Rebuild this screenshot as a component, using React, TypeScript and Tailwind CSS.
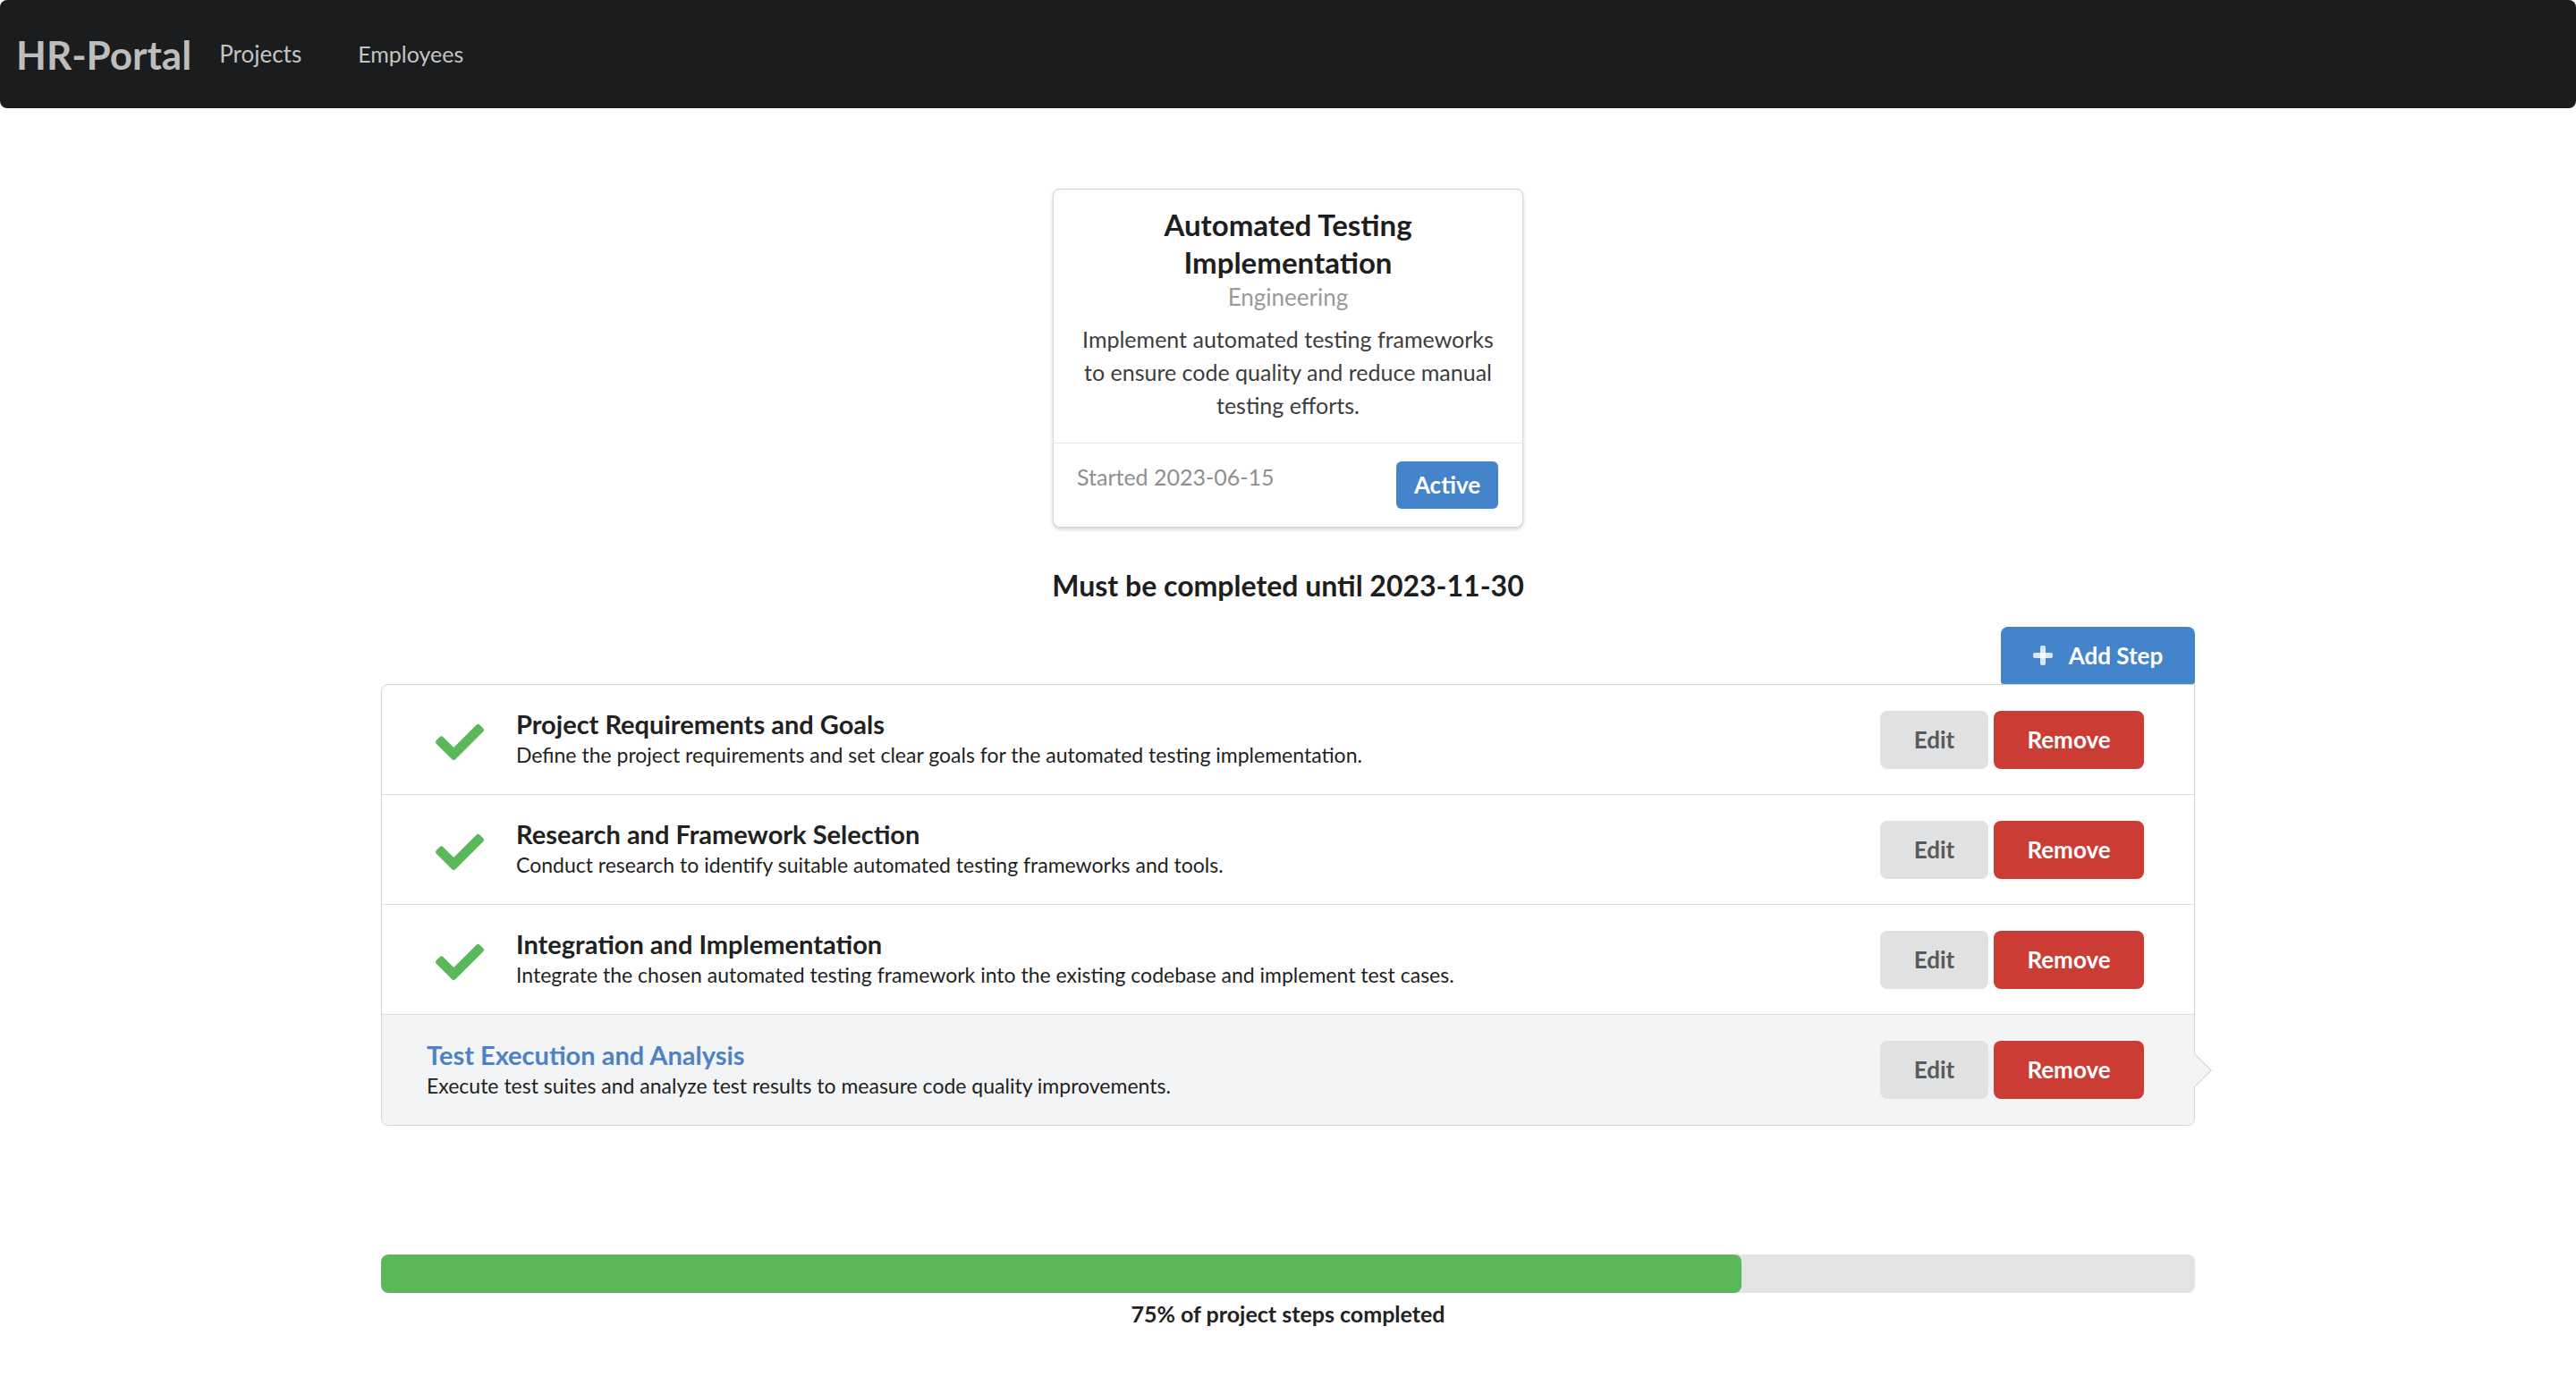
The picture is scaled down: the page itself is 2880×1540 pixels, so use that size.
import React from "react";

const CHECK =
  "M173.898 439.404l-166.4-166.4c-9.997-9.997-9.997-26.206 0-36.204l36.203-36.204c9.997-9.998 26.207-9.998 36.204 0L192 312.69 432.095 72.596c9.997-9.997 26.207-9.997 36.204 0l36.203 36.204c9.997 9.997 9.997 26.206 0 36.204l-294.4 294.401c-9.998 9.997-26.207 9.997-36.204-.001z";

type Step = { title: string; desc: string; done: boolean };

const steps: Step[] = [
  {
    title: "Project Requirements and Goals",
    desc: "Define the project requirements and set clear goals for the automated testing implementation.",
    done: true,
  },
  {
    title: "Research and Framework Selection",
    desc: "Conduct research to identify suitable automated testing frameworks and tools.",
    done: true,
  },
  {
    title: "Integration and Implementation",
    desc: "Integrate the chosen automated testing framework into the existing codebase and implement test cases.",
    done: true,
  },
  {
    title: "Test Execution and Analysis",
    desc: "Execute test suites and analyze test results to measure code quality improvements.",
    done: false,
  },
];

function StepRow({ step, last }: { step: Step; last: boolean }) {
  const active = !step.done;
  return (
    <div
      className={`relative flex items-center h-[123px] ${
        last ? "" : "border-b border-[#dedede]"
      } ${active ? "bg-[#f3f4f5] rounded-b-[8px] pl-[50px]" : "pl-[60px]"} pr-[56px]`}
    >
      {step.done && (
        <svg
          viewBox="0 0 512 512"
          className="w-[54px] h-[54px] shrink-0 mr-[36px] mt-[6px]"
        >
          <path d={CHECK} fill="#5bb85a" />
        </svg>
      )}
      <div className="flex-1 flex flex-col">
        <div
          className={`text-[29px] leading-[34px] font-bold ${
            active ? "text-[#4f82c4]" : "text-[#212121]"
          }`}
        >
          {step.title}
        </div>
        <div className="text-[23px] leading-[34px] text-[#1f1f1f]">{step.desc}</div>
      </div>
      <div className="flex gap-[6px]">
        <button className="w-[121px] h-[65px] rounded-[8px] bg-[#e0e1e2] text-[#5a5a5a] text-[26px] font-bold">
          Edit
        </button>
        <button className="w-[168px] h-[65px] rounded-[8px] bg-[#ca3c34] text-white text-[26px] font-bold">
          Remove
        </button>
      </div>
      {active && (
        <div className="absolute right-[-14px] top-1/2 -translate-y-1/2 w-[28px] h-[28px] rotate-45 bg-[#f3f4f5] border-t border-r border-[#d4d4d5]" />
      )}
    </div>
  );
}

export default function App() {
  return (
    <div className="min-h-[1540px] bg-white font-['Lato',sans-serif]">
      <nav className="h-[121px] bg-[#1b1c1d] rounded-[8px] flex items-center pl-[18px]">
        <span className="text-[44px] font-bold text-[#bdbdbd] leading-none">HR-Portal</span>
        <span className="ml-[31px] text-[26px] text-[#c4c4c4]">Projects</span>
        <span className="ml-[63px] text-[25px] text-[#c4c4c4]">Employees</span>
      </nav>

      <div className="flex justify-center mt-[90px]">
        <div className="w-[526px] h-[379px] rounded-[8px] bg-white border border-[#d4d4d5] shadow-[0_2px_4px_0_#d4d4d5] flex flex-col">
          <div className="px-[16px] pt-[18px] pb-[23px] text-center whitespace-nowrap">
            <div className="text-[33px] leading-[42px] font-bold text-[#1e1e1e]">
              Automated Testing
              <br />
              Implementation
            </div>
            <div className="text-[26px] leading-[36px] text-[#9a9a9a]">Engineering</div>
            <div className="mt-[11px] text-[25px] leading-[37px] text-[#3d3d3d]">
              Implement automated testing frameworks
              <br />
              to ensure code quality and reduce manual
              <br />
              testing efforts.
            </div>
          </div>
          <div className="flex-1 border-t border-[#e8e8e8] flex items-start justify-between pl-[26px] pr-[27px] pt-[20px]">
            <span className="text-[25px] leading-[34px] text-[#8f8f8f]">Started 2023-06-15</span>
            <span className="w-[114px] h-[53px] rounded-[6px] bg-[#4384cb] text-white text-[26px] font-bold flex items-center justify-center">
              Active
            </span>
          </div>
        </div>
      </div>

      <div className="text-center mt-[44px] text-[32px] leading-[42px] font-bold text-[#1e1e1e]">
        Must be completed until 2023-11-30
      </div>

      <div className="w-[2028px] mx-auto mt-[25px]">
        <div className="flex justify-end">
          <button className="w-[217px] h-[64px] rounded-t-[8px] rounded-b-[3px] bg-[#4384cb] text-white text-[26px] font-bold flex items-center justify-center gap-[18px]">
            <svg viewBox="0 0 22 22" className="w-[22px] h-[22px]">
              <rect x="8" y="0" width="6" height="22" rx="2" fill="rgba(255,255,255,0.8)" />
              <rect x="0" y="8" width="22" height="6" rx="2" fill="rgba(255,255,255,0.8)" />
            </svg>
            <span>Add Step</span>
          </button>
        </div>
        <div className="border border-[#d4d4d5] rounded-[8px] rounded-tr-none">
          {steps.map((s, i) => (
            <StepRow key={s.title} step={s} last={i === steps.length - 1} />
          ))}
        </div>

        <div className="mt-[144px] h-[43px] rounded-[8px] bg-[#e3e3e3] overflow-hidden">
          <div className="h-full rounded-[8px] bg-[#5bb85a]" style={{ width: "75%" }} />
        </div>
        <div className="text-center mt-[5px] text-[25px] leading-[36px] font-bold text-[#222]">
          75% of project steps completed
        </div>
      </div>
    </div>
  );
}
